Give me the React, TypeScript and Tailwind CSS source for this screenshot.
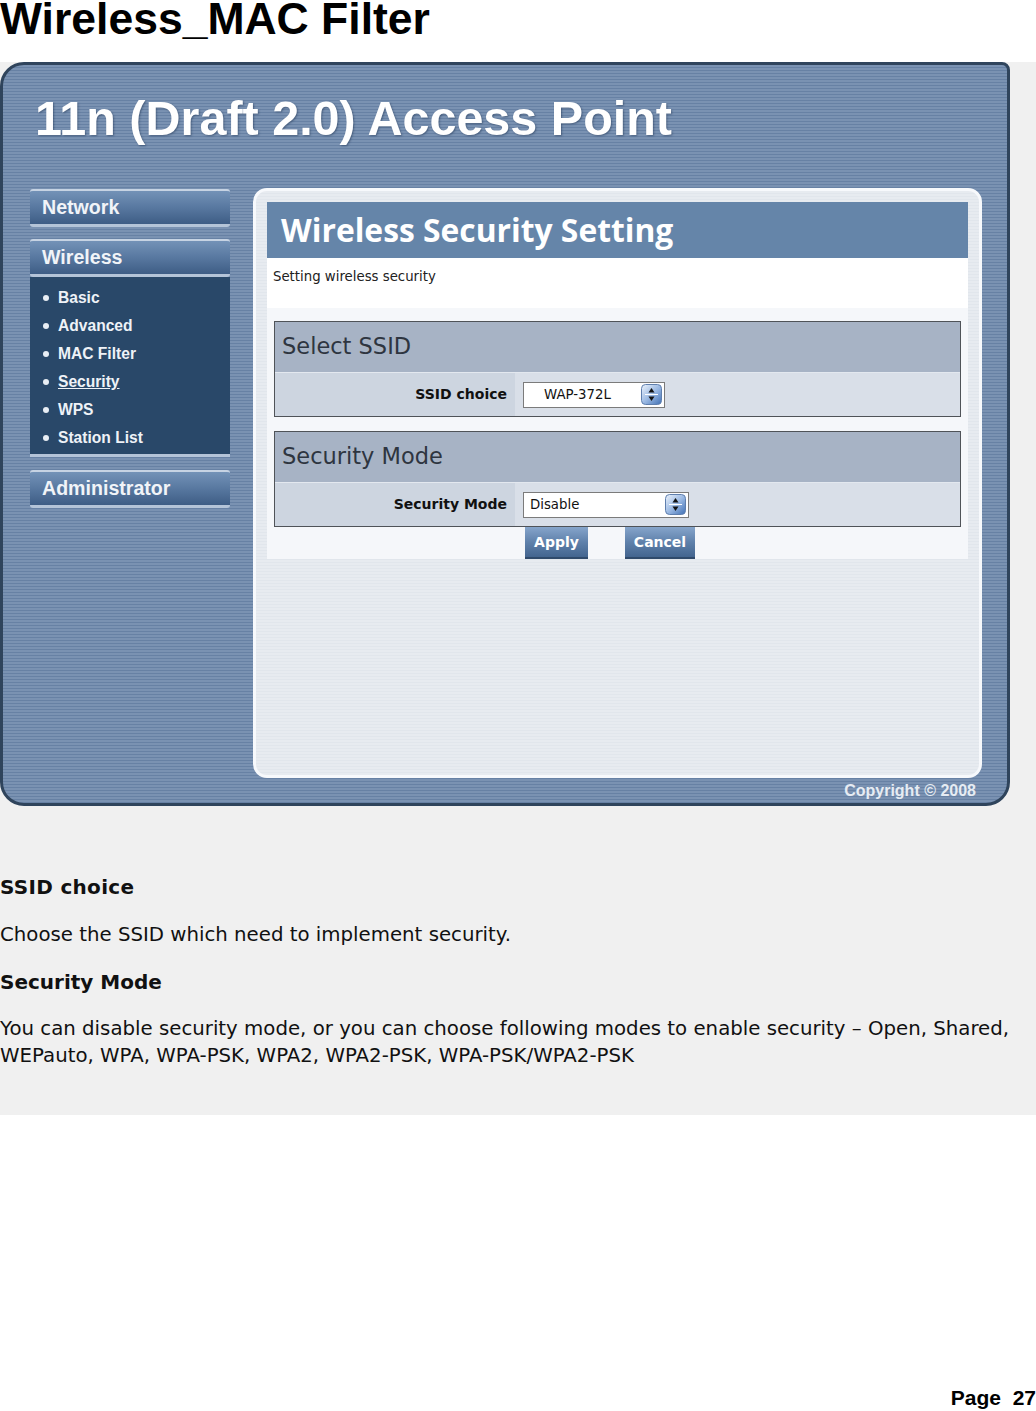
import React from 'react'

const stripes =
  "bg-[repeating-linear-gradient(180deg,#7a92b2_0px,#7a92b2_2px,#6781a4_2px,#6781a4_3px)]"

function NavButton({ label }: { label: string }) {
  return (
    <div className="h-[38px] rounded-[3px] border-t-2 border-t-[#c6d3e3] border-b-[3px] border-b-[#b4c4d8] bg-[linear-gradient(180deg,#7392b7_0%,#5878a0_50%,#3e5d85_100%)] pl-[12px] flex items-center font-['Liberation_Sans',Arial,sans-serif] text-[19.6px] font-bold text-[#f1f4f8]">
      {label}
    </div>
  )
}

function Spinner() {
  return (
    <svg width="21" height="21" viewBox="0 0 21 21">
      <defs>
        <linearGradient id="spin" x1="0" y1="0" x2="1" y2="1">
          <stop offset="0" stopColor="#eef4fc" />
          <stop offset="0.5" stopColor="#9dbbe4" />
          <stop offset="1" stopColor="#3f6fb4" />
        </linearGradient>
      </defs>
      <rect x="0.5" y="0.5" width="20" height="20" rx="4" fill="url(#spin)" stroke="#5f7fae" />
      <line x1="4" y1="10.5" x2="17" y2="10.5" stroke="#ffffff" strokeWidth="1" />
      <path d="M10.5 4 L13.5 8.5 L7.5 8.5 Z" fill="#111" />
      <path d="M10.5 17 L13.5 12.5 L7.5 12.5 Z" fill="#111" />
    </svg>
  )
}

function Select({ value, width, center }: { value: string; width: string; center?: boolean }) {
  return (
    <div className={`${width} h-[26px] bg-white border border-[#7b7b7b] flex items-center pr-[2px]`}>
      <span className={`flex-1 text-[13.3px] text-[#111] ${center ? 'pl-[20px]' : 'pl-[6px]'}`}>{value}</span>
      <Spinner />
    </div>
  )
}

function SettingBox({
  title,
  label,
  children,
}: {
  title: string
  label: string
  children: React.ReactNode
}) {
  return (
    <div className="border border-[#4f5358]">
      <div className="h-[50px] bg-[#a7b3c5] pl-[7px] flex items-center text-[22.5px] text-[#2e3540]">
        {title}
      </div>
      <div className="h-[44px] flex border-t border-t-[#e3e8ef]">
        <div className="w-[240px] bg-[#cdd5e0] flex items-center justify-end pr-[8px] text-[14px] font-bold text-[#111]">
          {label}
        </div>
        <div className="flex-1 bg-[#d9dfe8] flex items-center pl-[8px]">{children}</div>
      </div>
    </div>
  )
}

const subItems = ['Basic', 'Advanced', 'MAC Filter', 'Security', 'WPS', 'Station List']

export default function App() {
  return (
    <div className="w-[1036px] min-h-[1411px] bg-white font-['Liberation_Sans',Arial,sans-serif] text-black">
      <h1 className="h-[62px] text-[44.5px] font-bold leading-[37px] whitespace-nowrap">Wireless_MAC Filter</h1>

      <div className="bg-[#f0f0f0] h-[1053px]">
        {/* Router admin screenshot */}
        <div
          className={`w-[1010px] h-[744px] rounded-[24px] rounded-tr-[8px] border-[3px] border-[#2f445c] ${stripes} font-['DejaVu_Sans',sans-serif]`}
        >
          <div className="h-[124px] pt-[25px] pl-[32px]">
            <div className="font-['Liberation_Sans',Arial,sans-serif] text-[48.5px] leading-[56px] font-bold text-white whitespace-nowrap [text-shadow:1px_1px_2px_rgba(30,50,80,0.5)]">
              11n (Draft 2.0) Access Point
            </div>
          </div>

          <div className="flex pl-[27px]">
            {/* Sidebar */}
            <div className="w-[200px]">
              <NavButton label="Network" />
              <div className="mt-[12px]">
                <NavButton label="Wireless" />
              </div>
              <div className="h-[180px] bg-[#294869] border-b-[3px] border-b-[#b4c4d8] pt-[7px] pl-[13px] font-['Liberation_Sans',Arial,sans-serif]">
                {subItems.map((item) => (
                  <div key={item} className="h-[28px] flex items-center text-[15.6px] font-bold text-[#eef2f7]">
                    <span className="w-[6px] h-[6px] rounded-full bg-[#e8eef5] mr-[9px]" />
                    <span className={item === 'Security' ? 'underline' : ''}>{item}</span>
                  </div>
                ))}
              </div>
              <div className="mt-[13px]">
                <NavButton label="Administrator" />
              </div>
            </div>

            {/* Main panel */}
            <div className="ml-[23px] -mt-px w-[729px] h-[590px] rounded-[14px] border-[3px] border-[#f7f9fc] bg-[repeating-linear-gradient(180deg,#e7ebf0_0px,#e7ebf0_2px,#e1e6ec_2px,#e1e6ec_3px)] p-[11px]">
              <div className="h-[56px] bg-[#6585a9] pl-[14px] flex items-center font-['Open_Sans',sans-serif] text-[31.8px] font-bold text-white whitespace-nowrap">
                Wireless Security Setting
              </div>
              <div className="h-[50px] bg-white pl-[6px] pt-[10px] text-[13.3px] leading-[18px] text-[#222]">
                Setting wireless security
              </div>
              <div className="bg-[#f5f7fa] px-[7px] pt-[13px]">
                <SettingBox title="Select SSID" label="SSID choice">
                  <Select value="WAP-372L" width="w-[142px]" center />
                </SettingBox>
                <div className="mt-[14px]">
                  <SettingBox title="Security Mode" label="Security Mode">
                    <Select value="Disable" width="w-[166px]" />
                  </SettingBox>
                </div>
                <div className="h-[32px] flex pl-[251px]">
                  <button className="w-[63px] h-[32px] bg-[linear-gradient(180deg,#86a5cb_0%,#5f81ab_50%,#43658f_100%)] border-b-2 border-b-[#2f4a6b] text-[14px] font-bold text-white">
                    Apply
                  </button>
                  <button className="ml-[37px] w-[70px] h-[32px] bg-[linear-gradient(180deg,#86a5cb_0%,#5f81ab_50%,#43658f_100%)] border-b-2 border-b-[#2f4a6b] text-[14px] font-bold text-white">
                    Cancel
                  </button>
                </div>
              </div>
            </div>
          </div>

          <div className="mt-[5px] pr-[31px] text-right font-['Liberation_Sans',Arial,sans-serif] text-[16px] leading-[16px] font-bold text-[#e6ecf3]">
            Copyright © 2008
          </div>
        </div>

        {/* Description text */}
        <div className="font-['DejaVu_Sans',sans-serif] text-[#111]">
          <div className="mt-[69px] text-[20px] leading-[24px] font-bold tracking-[0.3px]">SSID choice</div>
          <div className="mt-[24px] text-[19.75px] leading-[24px]">Choose the SSID which need to implement security.</div>
          <div className="mt-[23px] text-[20px] leading-[24px] font-bold">Security Mode</div>
          <div className="mt-[21px] text-[19.75px] leading-[27px] whitespace-nowrap">
            You can disable security mode, or you can choose following modes to enable security – Open, Shared,
            <br />
            WEPauto, WPA, WPA-PSK, WPA2, WPA2-PSK, WPA-PSK/WPA2-PSK
          </div>
        </div>
      </div>

      <div className="mt-[271px] flex justify-end">
        <span className="text-[21px] leading-[24px] font-bold whitespace-pre">Page  27</span>
      </div>
    </div>
  )
}
